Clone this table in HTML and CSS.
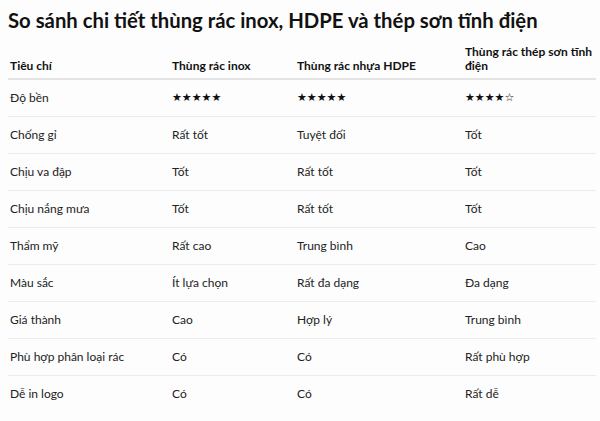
FILE: index.html
```html
<!DOCTYPE html>
<html lang="vi">
<head>
<meta charset="utf-8">
<link rel="stylesheet" href="styles.css">
</head>
<body>
<div class="page">
<h2 class="title">So sánh chi tiết thùng rác inox, HDPE và thép sơn tĩnh điện</h2>
<table class="cmp">
<colgroup><col class="c1"><col class="c2"><col class="c3"><col class="c4"></colgroup>
<thead>
<tr><th>Tiêu chí</th><th>Thùng rác inox</th><th>Thùng rác nhựa HDPE</th><th>Thùng rác thép sơn tĩnh điện</th></tr>
</thead>
<tbody>
<tr><td>Độ bền</td><td class="stars">★★★★★</td><td class="stars">★★★★★</td><td class="stars">★★★★☆</td></tr>
<tr><td>Chống gỉ</td><td>Rất tốt</td><td>Tuyệt đối</td><td>Tốt</td></tr>
<tr><td>Chịu va đập</td><td>Tốt</td><td>Rất tốt</td><td>Tốt</td></tr>
<tr><td>Chịu nắng mưa</td><td>Tốt</td><td>Rất tốt</td><td>Tốt</td></tr>
<tr><td>Thẩm mỹ</td><td>Rất cao</td><td>Trung bình</td><td>Cao</td></tr>
<tr><td>Màu sắc</td><td>Ít lựa chọn</td><td>Rất đa dạng</td><td>Đa dạng</td></tr>
<tr><td>Giá thành</td><td>Cao</td><td>Hợp lý</td><td>Trung bình</td></tr>
<tr><td>Phù hợp phân loại rác</td><td>Có</td><td>Có</td><td>Rất phù hợp</td></tr>
<tr><td>Dễ in logo</td><td>Có</td><td>Có</td><td>Rất dễ</td></tr>
</tbody>
</table>
</div>
</body>
</html>
```
FILE: styles.css
```css
html, body {
  margin: 0;
  background: #fdfdfd;
}
.page {
  padding: 0 8px;
  font-family: Lato, "Open Sans", sans-serif;
  color: #222;
}
.title {
  margin: 0;
  padding-top: 5px;
  font-size: 20.3px;
  font-weight: 700;
  line-height: 30px;
  color: #111;
}
.cmp {
  width: 588px;
  margin-top: 10px;
  border-collapse: collapse;
  table-layout: fixed;
  font-size: 12px;
}
.c1 { width: 162px; }
.c2 { width: 125px; }
.c3 { width: 168px; }
.c4 { width: 133px; }
.cmp th {
  text-align: left;
  font-weight: 700;
  vertical-align: bottom;
  padding: 0 2px 5px;
  line-height: 14px;
  color: #111;
  border-bottom: 2px solid #e4e4e4;
}
.cmp td {
  padding: 8px 2px;
  line-height: 20px;
  border-bottom: 1px solid #ececec;
}
.cmp tbody tr:last-child td {
  border-bottom: none;
}
.stars {
  font-family: "DejaVu Sans", sans-serif;
  font-size: 11px;
  color: #111;
}
```
